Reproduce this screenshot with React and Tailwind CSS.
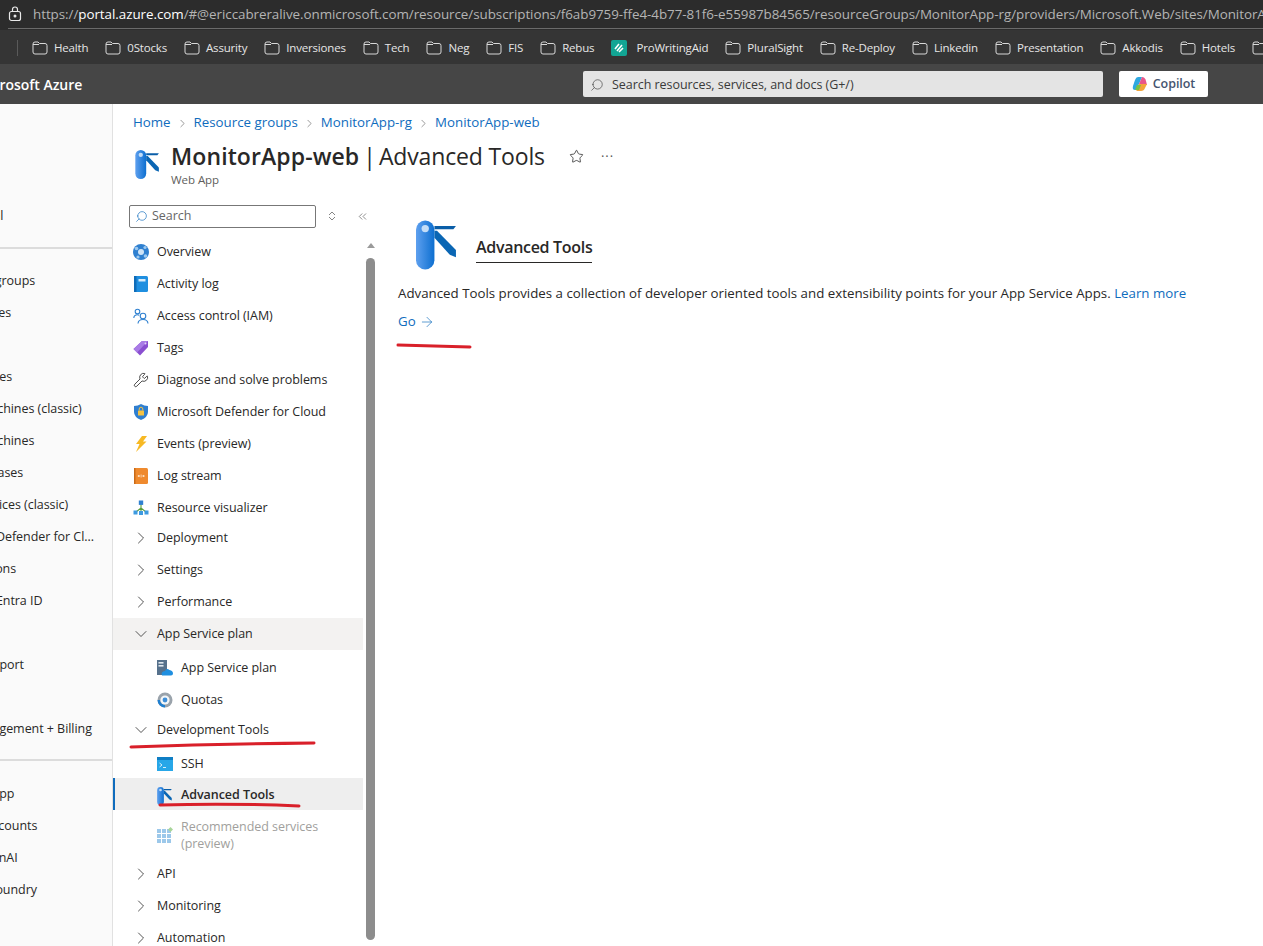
import React from "react";
import { ChevronRight, ChevronDown, ChevronsLeft, Star, Search, Wrench, ArrowRight } from "lucide-react";

const URL_TEXT =
  "/#@ericcabreralive.onmicrosoft.com/resource/subscriptions/f6ab9759-ffe4-4b77-81f6-e55987b84565/resourceGroups/MonitorApp-rg/providers/Microsoft.Web/sites/MonitorApp-web/advancedTools";

const bookmarks = [
  "Health", "0Stocks", "Assurity", "Inversiones", "Tech", "Neg", "FIS", "Rebus",
  "ProWritingAid", "PluralSight", "Re-Deploy", "Linkedin", "Presentation", "Akkodis", "Hotels", "Travel",
];

const FolderIcon = () => (
  <svg width="16" height="14" viewBox="0 0 16 14" fill="none" stroke="#d8d8d8" strokeWidth="1" className="shrink-0">
    <path d="M1 3 Q1 1 3 1 H6 L7.5 2.5 H13 Q15 2.5 15 4.5 V11 Q15 13 13 13 H3 Q1 13 1 11 Z" />
    <path d="M1 3.5 H7" />
  </svg>
);

const WritingIcon = () => (
  <svg width="16" height="16" viewBox="0 0 16 16" className="shrink-0">
    <rect width="16" height="16" rx="2" fill="#12a594" />
    <path d="M4 9 L8 4 M6 11 L11 5 M8 12 L12 8" stroke="#fff" strokeWidth="1.6" />
  </svg>
);

const CopilotIcon = () => (
  <svg width="16" height="16" viewBox="0 0 16 16">
    <path d="M6 1 H10 L7 8 L4 14 H3 Q0 14 1 10 L3 4 Q4 1 6 1Z" fill="#2fa8e0" />
    <path d="M10 1 Q13 1 14 5 L15 9 H10 L7 8Z" fill="#e8568a" />
    <path d="M4 14 L7 8 H15 L13 12 Q12 15 9 15 H5Z" fill="#f2a53a" />
    <path d="M5 9 H9 L7 14 H3Z" fill="#7ac143" />
  </svg>
);

const ToolIcon = ({ className }) => (
  <svg viewBox="0 0 42 48" className={className}>
    <defs>
      <linearGradient id="toolPill" x1="0" x2="1" y1="0" y2="0">
        <stop offset="0" stopColor="#5ea0ef" />
        <stop offset="1" stopColor="#0d6fd0" />
      </linearGradient>
    </defs>
    <rect x="0" y="0" width="18" height="48" rx="9" fill="url(#toolPill)" />
    <circle cx="9" cy="8" r="3.6" fill="#c3ddf7" />
    <path d="M18 5.5 H39 L36.5 8.5 H18 Z" fill="#0a5ea8" />
    <path d="M18 10 H20.5 L39 29 V36 L33 33.5 L18 17 Z" fill="#0a66b4" />
  </svg>
);

const OverviewIcon = () => (
  <svg width="16" height="16" viewBox="0 0 16 16">
    <circle cx="8" cy="8" r="8" fill="#2f80d0" />
    <circle cx="8" cy="8" r="3" fill="#cfe4f7" />
    <circle cx="3.5" cy="4.5" r="1.8" fill="#9cc8ef" />
    <circle cx="12" cy="3.5" r="1.6" fill="#9cc8ef" />
    <circle cx="5" cy="13" r="1.6" fill="#9cc8ef" />
    <circle cx="12.5" cy="12" r="1.8" fill="#9cc8ef" />
  </svg>
);

const LogIcon = () => (
  <svg width="14" height="16" viewBox="0 0 14 16">
    <rect width="14" height="16" rx="1.5" fill="#1f8fe0" />
    <rect x="0" width="2.5" height="16" fill="#0f6cb8" />
    <rect x="4.5" y="3" width="7" height="2.5" fill="#d7ecfb" />
  </svg>
);

const AccessIcon = () => (
  <svg width="16" height="16" viewBox="0 0 16 16" fill="none" stroke="#2f80d0" strokeWidth="1.1">
    <circle cx="4.5" cy="3.5" r="2.3" />
    <path d="M0.8 10 Q1 6.8 4.5 6.8 Q5.5 6.8 6.2 7.2" />
    <circle cx="10" cy="8" r="2.8" />
    <path d="M5 15.5 Q5.3 11.5 10 11.5 Q14.7 11.5 15 15.5" />
  </svg>
);

const TagIcon = () => (
  <svg width="16" height="16" viewBox="0 0 16 16">
    <path d="M9 1 H15 V7 L7 15.5 L0.5 9 Z" fill="#8a4fd0" />
    <path d="M9 1 H15 L13 3 L4 12.5 L0.5 9 Z" fill="#a97be6" />
    <circle cx="12.5" cy="3.5" r="1" fill="#e4d4f7" />
  </svg>
);

const ShieldIcon = () => (
  <svg width="14" height="16" viewBox="0 0 14 16">
    <path d="M7 0 Q10 2 14 2 V8 Q14 13 7 16 Q0 13 0 8 V2 Q4 2 7 0Z" fill="#2f7fd0" />
    <rect x="4" y="6.5" width="6" height="5" rx="0.6" fill="#f5c242" />
    <path d="M5.2 6.5 V5 A1.8 1.8 0 0 1 8.8 5 V6.5" fill="none" stroke="#f5c242" strokeWidth="1" />
  </svg>
);

const BoltIcon = () => (
  <svg width="12" height="16" viewBox="0 0 12 16">
    <path d="M7 0 H12 L8 5.5 H11.5 L1 16 L4.5 8 H1 Z" fill="#f7b924" />
  </svg>
);

const StreamIcon = () => (
  <svg width="14" height="16" viewBox="0 0 14 16">
    <rect width="14" height="16" rx="1.5" fill="#ef8a2e" />
    <rect x="0" width="1.5" height="16" fill="#c96a17" />
    <circle cx="4.8" cy="8" r="1.1" fill="#fde3c8" />
    <circle cx="9.5" cy="8" r="1.1" fill="#fde3c8" />
    <path d="M7.1 6.5 V9.5" stroke="#fde3c8" strokeWidth="0.8" />
  </svg>
);

const VisualizerIcon = () => (
  <svg width="16" height="16" viewBox="0 0 16 16">
    <path d="M8 4 V8 M8 8 L3 12 M8 8 L13 12 M8 8 V12" stroke="#5c9e3a" strokeWidth="1.1" fill="none" />
    <rect x="5.8" y="0.5" width="4.4" height="4.4" fill="#2f80d0" />
    <rect x="0.5" y="10.5" width="4" height="4" fill="#3d9ae0" />
    <rect x="6" y="11" width="4" height="4" fill="#3d9ae0" />
    <rect x="11.5" y="10.5" width="4" height="4" fill="#3d9ae0" />
  </svg>
);

const PlanIcon = () => (
  <svg width="16" height="16" viewBox="0 0 16 16">
    <rect x="0" y="0" width="10" height="15" fill="#56718c" />
    <rect x="1.5" y="2" width="5" height="1.6" fill="#dfe7ee" />
    <rect x="1.5" y="5" width="5" height="1.6" fill="#dfe7ee" />
    <path d="M5 15.5 Q3.5 11.5 8 11 Q9.5 7.5 12.5 10 Q16 10.5 16 13.5 Q16 15.5 14 15.5 Z" fill="#1f8fe0" />
  </svg>
);

const QuotaIcon = () => (
  <svg width="16" height="16" viewBox="0 0 16 16">
    <circle cx="8" cy="8" r="7.5" fill="#9aa3ab" />
    <path d="M8 15.5 A7.5 7.5 0 0 1 0.5 8 H3 A5 5 0 0 0 8 13 Z" fill="#1f7fd0" />
    <circle cx="8" cy="8" r="4.6" fill="#f3f6f8" />
    <circle cx="8" cy="8" r="2.4" fill="#3f8fd8" />
  </svg>
);

const SshIcon = () => (
  <svg width="16" height="14" viewBox="0 0 16 14">
    <rect width="16" height="14" fill="#27a7e8" />
    <rect width="16" height="3" fill="#0f7ec4" />
    <path d="M2.5 6 L5 8 L2.5 10 M6 10.5 H9" stroke="#e8f6fd" strokeWidth="0.9" fill="none" />
  </svg>
);

const GridIcon = () => (
  <svg width="16" height="16" viewBox="0 0 16 16" fill="#9cc8ea">
    {[2, 7, 12].flatMap((y) =>
      [0, 5, 10].map((x) => <rect key={`${x}-${y}`} x={x} y={y} width="4" height="4" />)
    )}
    <path d="M13.5 0 L16 2.5 L13.5 5 L11 2.5 Z" fill="#a8d59a" />
  </svg>
);

const topItems = [
  { label: "Overview", icon: <OverviewIcon /> },
  { label: "Activity log", icon: <LogIcon /> },
  { label: "Access control (IAM)", icon: <AccessIcon /> },
  { label: "Tags", icon: <TagIcon /> },
  { label: "Diagnose and solve problems", icon: <Wrench size={18} strokeWidth={1.2} color="#222" /> },
  { label: "Microsoft Defender for Cloud", icon: <ShieldIcon /> },
  { label: "Events (preview)", icon: <BoltIcon /> },
  { label: "Log stream", icon: <StreamIcon /> },
  { label: "Resource visualizer", icon: <VisualizerIcon /> },
];

const MenuRow = ({ icon, label }) => (
  <div className="flex h-8 items-center">
    <span className="w-[44px] shrink-0 pl-[20px]">
      <span className="flex w-4 justify-center">{icon}</span>
    </span>
    <span className="whitespace-nowrap">{label}</span>
  </div>
);

const GroupRow = ({ label, open, shaded, className = "" }) => (
  <div className={`flex h-8 items-center ${shaded ? "bg-[#f3f2f1]" : ""} ${className}`}>
    <span className="flex w-[44px] shrink-0 justify-center pl-[16px] pr-[4px] text-[#333]">
      {open ? <ChevronDown size={20} strokeWidth={1} /> : <ChevronRight size={20} strokeWidth={1} />}
    </span>
    <span className="whitespace-nowrap">{label}</span>
  </div>
);

const SubRow = ({ icon, label, className = "" }) => (
  <div className={`flex h-8 items-center ${className}`}>
    <span className="w-[68px] shrink-0 pl-[44px]">{icon}</span>
    <span className="whitespace-nowrap">{label}</span>
  </div>
);

const Crumb = ({ label }) => <span className="text-[#0f6cbd]">{label}</span>;
const CrumbSep = () => <ChevronRight size={13} strokeWidth={1.2} className="mx-[5px] text-[#666]" />;

const leftItems = [
  "Resource groups", "App Services", "", "All resources",
  "Virtual machines (classic)", "Virtual machines", "SQL databases", "Cloud services (classic)",
  "Microsoft Defender for Cl...", "Subscriptions", "Microsoft Entra ID", "", "Help + support", "", "Cost Management + Billing",
];
const leftBottom = ["Function App", "Storage accounts", "Azure OpenAI", "Azure AI Foundry"];

export default function App() {
  return (
    <div className="relative h-[946px] w-[1263px] overflow-hidden bg-white font-['Open_Sans',sans-serif] text-[12.5px] tracking-[-0.05px] text-[#292827]">
      {/* browser address bar */}
      <div className="h-[30px] overflow-hidden bg-[#2c2c2c] pl-[8px]">
        <div className="flex h-[29px] items-center whitespace-nowrap border-b border-[#6a6a6a] text-[13.4px] text-[#b4b4b4]">
          <svg width="14" height="16" viewBox="0 0 14 16" fill="none" stroke="#e8e8e8" strokeWidth="1.2" className="mr-[11px] shrink-0">
            <rect x="1.5" y="5.5" width="11" height="9" rx="2" />
            <path d="M4.5 5.5 V3.5 A2.5 2.5 0 0 1 9.5 3.5 V5.5" />
            <circle cx="7" cy="10" r="0.9" fill="#e8e8e8" />
          </svg>
          <span>https://</span>
          <span className="text-white">portal.azure.com</span>
          <span>{URL_TEXT}</span>
        </div>
      </div>

      {/* bookmarks */}
      <div className="flex h-[34px] items-center overflow-hidden whitespace-nowrap bg-[#353535] pt-px text-[11.5px] tracking-[-0.18px] text-[#e6e6e6]">
        <span className="ml-[-6px] w-[23px] shrink-0">s</span>
        <span className="h-[16px] w-px shrink-0 bg-[#5a5a5a]" />
        <div className="ml-[14px] flex shrink-0 items-center gap-[17px]">
          {bookmarks.map((name) => (
            <div key={name} className="flex shrink-0 items-center gap-[6px]">
              {name === "ProWritingAid" ? <WritingIcon /> : <FolderIcon />}
              <span className={name === "ProWritingAid" ? "ml-[3px]" : ""}>{name}</span>
            </div>
          ))}
        </div>
      </div>

      {/* azure header */}
      <div className="flex h-[40px] items-center bg-[#464646]">
        <span className="ml-[-24px] w-[607px] shrink-0 whitespace-nowrap text-[14px] font-semibold text-white">Microsoft Azure</span>
        <div className="flex h-[26px] w-[520px] items-center rounded-[2px] bg-[#e4e4e4] pl-[7px] pt-[2px] text-[12.5px] text-[#3a3a3a]">
          <Search size={14} strokeWidth={1.1} className="mr-[8px] -scale-x-100" />
          Search resources, services, and docs (G+/)
        </div>
        <div className="ml-[16px] flex h-[26px] w-[89px] items-center justify-center gap-[5px] rounded-[2px] bg-white text-[12.5px] font-semibold text-[#44546f]">
          <CopilotIcon />
          Copilot
        </div>
      </div>

      <div className="flex h-[842px]">
        {/* collapsed left portal menu */}
        <div className="w-[113px] shrink-0 overflow-hidden border-r border-[#e1e1e1] bg-[#fafafa] pt-[96px] whitespace-nowrap">
          <div className="ml-[-31px] flex h-8 items-center">Portal</div>
          <div className="mt-[15px] border-t-2 border-[#dcdcdc] pt-[17px]" />
          <div className="ml-[-62px] mt-[-1px]">
            {leftItems.map((t, i) => (
              <div key={i} className="flex h-8 items-center">{t}</div>
            ))}
          </div>
          <div className="mt-[14px] border-t-2 border-[#dcdcdc] pt-[17px]" />
          <div className="ml-[-62px]">
            {leftBottom.map((t) => (
              <div key={t} className="flex h-8 items-center">{t}</div>
            ))}
          </div>
        </div>

        <div className="min-w-0 flex-1">
          {/* breadcrumb and title */}
          <div className="flex h-[36px] items-center pl-[20px] pt-[2px] text-[13.3px] tracking-normal">
            <Crumb label="Home" />
            <CrumbSep />
            <Crumb label="Resource groups" />
            <CrumbSep />
            <Crumb label="MonitorApp-rg" />
            <CrumbSep />
            <Crumb label="MonitorApp-web" />
          </div>
          <div className="flex h-[58px] pl-[22px]">
            <ToolIcon className="mt-[10px] h-[29px] w-[26px] shrink-0" />
            <div className="ml-[10px]">
              <div className="flex items-center">
                <h1 className="whitespace-nowrap text-[23px] leading-[32px] tracking-normal text-[#292827]">
                  <span className="font-semibold tracking-[0.1px]">MonitorApp-web</span>
                  <span className="ml-[4px]">|</span>
                  <span className="ml-[3px] tracking-[-0.15px]">Advanced Tools</span>
                </h1>
                <Star size={15} strokeWidth={1.2} className="ml-[24px] text-[#222]" />
                <span className="ml-[17px] text-[13px] leading-none tracking-[1px] text-[#555]">···</span>
              </div>
              <div className="mt-px text-[11.5px] leading-[14px] text-[#605e5c]">Web App</div>
            </div>
          </div>

          <div className="flex">
            {/* resource menu */}
            <div className="w-[250px] shrink-0">
              <div className="flex h-[32px] items-center pl-[16px] pt-[4px]">
                <div className="flex h-[23px] w-[187px] shrink-0 items-center rounded-[2px] border border-[#777] pl-[5px] text-[#666]">
                  <Search size={13} strokeWidth={1.2} className="mr-[4px] -scale-x-100 text-[#0f6cbd]" />
                  Search
                </div>
                <svg width="8" height="10" viewBox="0 0 8 10" fill="none" stroke="#777" strokeWidth="0.9" className="ml-[12px] shrink-0">
                  <path d="M1 4 L4 1 L7 4 M1 6 L4 9 L7 6" />
                </svg>
                <ChevronsLeft size={13} strokeWidth={1.1} className="ml-[20px] shrink-0 text-[#444]" />
              </div>

              <div className="pt-[6px]">
                {topItems.map((item) => (
                  <MenuRow key={item.label} {...item} />
                ))}
                <div className="mt-[-2px]" />
                <GroupRow label="Deployment" />
                <GroupRow label="Settings" />
                <GroupRow label="Performance" />
                <GroupRow label="App Service plan" open shaded />
                <SubRow className="mt-[2px]" icon={<PlanIcon />} label="App Service plan" />
                <SubRow icon={<QuotaIcon />} label="Quotas" />
                <GroupRow label="Development Tools" open className="mt-[-2px]" />
                <SubRow className="pt-[4px]" icon={<SshIcon />} label="SSH" />
                <div className="flex h-8 items-center border-l-2 border-[#0f6cbd] bg-[#eeeeee] pt-[3px] font-semibold">
                  <span className="w-[66px] shrink-0 pl-[42px]">
                    <ToolIcon className="h-[18px] w-[16px]" />
                  </span>
                  <span className="whitespace-nowrap">Advanced Tools</span>
                </div>
                <div className="flex h-[48px] items-center pt-[2px] text-[#a19f9d]">
                  <span className="w-[68px] shrink-0 pl-[44px]"><GridIcon /></span>
                  <span className="leading-[17px]">Recommended services<br />(preview)</span>
                </div>
                <GroupRow label="API" />
                <GroupRow label="Monitoring" />
                <GroupRow label="Automation" />
              </div>
            </div>

            {/* scrollbar */}
            <div className="flex w-[14px] shrink-0 flex-col items-center pl-[1px] pt-[45px]">
              <span className="h-0 w-0 border-x-[4px] border-b-[5px] border-x-transparent border-b-[#9a9a9a]" />
              <span className="mt-[10px] h-[682px] w-[9px] rounded-full bg-[#8d8d8d]" />
            </div>

            {/* content */}
            <div className="min-w-0 flex-1 pl-[21px] pt-[22px] text-[13.3px] tracking-normal">
              <div className="flex pl-[18px]">
                <ToolIcon className="h-[50px] w-[43px] shrink-0" />
                <div className="ml-[17px] mt-[15px] h-[28px] border-b border-[#292827] text-[16px] font-semibold leading-[24px] tracking-[-0.3px]">
                  Advanced Tools
                </div>
              </div>
              <p className="mt-[14px] whitespace-nowrap leading-[18px]">
                Advanced Tools provides a collection of developer oriented tools and extensibility points for your App Service Apps.{" "}
                <span className="text-[#0f6cbd]">Learn more</span>
              </p>
              <div className="mt-[10px] flex items-center text-[#0f6cbd]">
                Go
                <ArrowRight size={16} strokeWidth={1} className="ml-[3px]" />
              </div>
            </div>
          </div>
        </div>
      </div>

      {/* red marker annotations drawn over the capture */}
      <svg className="pointer-events-none absolute left-0 top-0" width="1263" height="946" fill="none" stroke="#d9202a" strokeLinecap="round">
        <path d="M131 747 Q 220 744 314 743" strokeWidth="3" />
        <path d="M160 805 Q 230 803 299 806" strokeWidth="3" />
        <path d="M398 345 Q 435 346 470 347" strokeWidth="3" />
      </svg>
    </div>
  );
}
